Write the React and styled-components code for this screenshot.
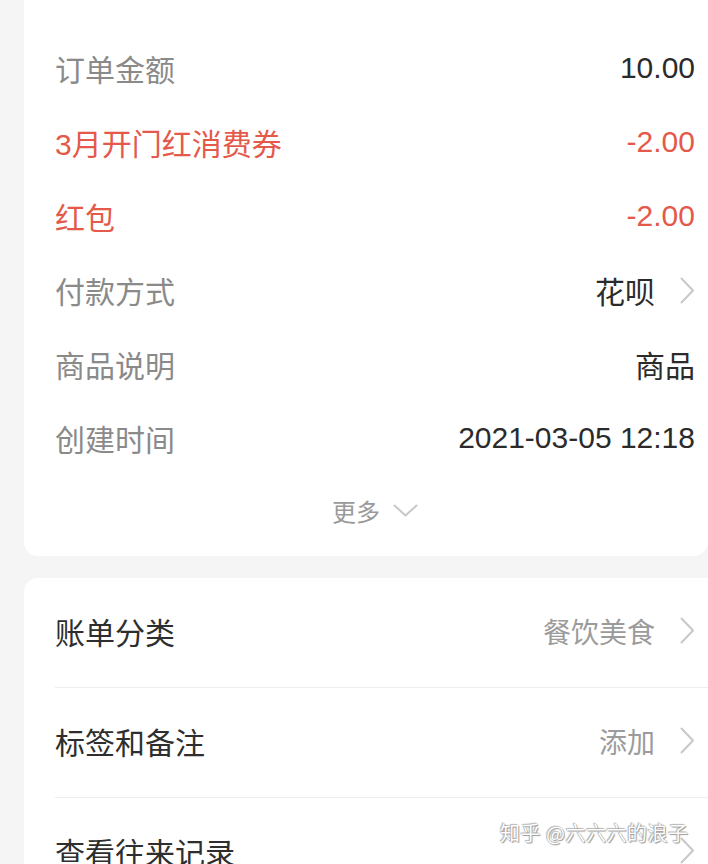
import React from "react";
import styled, { createGlobalStyle } from "styled-components";

const GlobalStyle = createGlobalStyle`
  html, body {
    margin: 0;
    padding: 0;
    background: #f5f5f5;
  }
  body {
    font-family: "Liberation Sans", "Noto Sans CJK SC", sans-serif;
    -webkit-font-smoothing: antialiased;
  }
`;

const Page = styled.div`
  position: relative;
  width: 708px;
  height: 864px;
  overflow: hidden;
  padding-left: 24px;
  box-sizing: border-box;
  display: flex;
  flex-direction: column;
  gap: 22px;
`;

const Card = styled.div`
  background: #fff;
  border-radius: ${(p) => (p.$top ? "0 0 14px 14px" : "14px 0 0 0")};
  padding: ${(p) => (p.$top ? "31px 13px 11px 31px" : "0 0 0 31px")};
  flex-shrink: 0;
`;

const DetailRow = styled.div`
  display: flex;
  align-items: center;
  justify-content: space-between;
  height: 74px;
  font-size: 30px;
`;

const Label = styled.span`
  color: ${(p) => (p.$red ? "#e4594a" : "#8a8a8a")};
`;

const Value = styled.span`
  display: flex;
  align-items: center;
  gap: 25px;
  color: ${(p) => (p.$red ? "#e4594a" : "#2b2b2b")};
`;

const MoreRow = styled.div`
  display: flex;
  align-items: center;
  justify-content: center;
  gap: 13px;
  height: 70px;
  font-size: 24px;
  color: #9a9a9a;
`;

const MenuRow = styled.div`
  display: flex;
  align-items: center;
  justify-content: space-between;
  box-sizing: border-box;
  height: ${(p) => (p.$first ? "109px" : "110px")};
  padding: 0 13px 4px 0;
  border-top: ${(p) => (p.$first ? "none" : "1px solid #eeeeee")};
`;

const MenuLabel = styled.span`
  font-size: 30px;
  color: #2e2e2e;
`;

const MenuValue = styled.span`
  display: flex;
  align-items: center;
  gap: 25px;
  font-size: 28px;
  color: #9b9b9b;
`;

const Watermark = styled.div`
  position: absolute;
  left: 500px;
  top: 818px;
  font-size: 20px;
  color: #ffffff;
  letter-spacing: 0.5px;
  text-shadow: 0 0 1px #8a8a8a, 1px 1px 1px #9a9a9a, -1px -1px 1px #bbbbbb;
  font-family: "Noto Sans CJK SC", sans-serif;
`;

const ChevronRight = () => (
  <svg width="15" height="27" viewBox="0 0 15 27" fill="none">
    <polyline
      points="1.5,1.5 13,13.5 1.5,25.5"
      stroke="#c8c8c8"
      strokeWidth="2"
      strokeLinecap="round"
      strokeLinejoin="round"
    />
  </svg>
);

const ChevronDown = () => (
  <svg width="25" height="13" viewBox="0 0 25 13" fill="none">
    <polyline
      points="1.5,1.5 12.5,11.5 23.5,1.5"
      stroke="#c8c8c8"
      strokeWidth="2"
      strokeLinecap="round"
      strokeLinejoin="round"
    />
  </svg>
);

const details = [
  { label: "订单金额", value: "10.00" },
  { label: "3月开门红消费券", value: "-2.00", red: true },
  { label: "红包", value: "-2.00", red: true },
  { label: "付款方式", value: "花呗", arrow: true },
  { label: "商品说明", value: "商品" },
  { label: "创建时间", value: "2021-03-05 12:18" },
];

const menu = [
  { label: "账单分类", value: "餐饮美食" },
  { label: "标签和备注", value: "添加" },
  { label: "查看往来记录", value: "" },
];

export default function App() {
  return (
    <>
      <GlobalStyle />
      <Page>
        <Card $top>
          {details.map((d) => (
            <DetailRow key={d.label}>
              <Label $red={d.red}>{d.label}</Label>
              <Value $red={d.red}>
                {d.value}
                {d.arrow && <ChevronRight />}
              </Value>
            </DetailRow>
          ))}
          <MoreRow>
            更多
            <ChevronDown />
          </MoreRow>
        </Card>
        <Card>
          {menu.map((m, i) => (
            <MenuRow key={m.label} $first={i === 0}>
              <MenuLabel>{m.label}</MenuLabel>
              <MenuValue>
                {m.value}
                <ChevronRight />
              </MenuValue>
            </MenuRow>
          ))}
        </Card>
        <Watermark>知乎 @六六六的浪子</Watermark>
      </Page>
    </>
  );
}
